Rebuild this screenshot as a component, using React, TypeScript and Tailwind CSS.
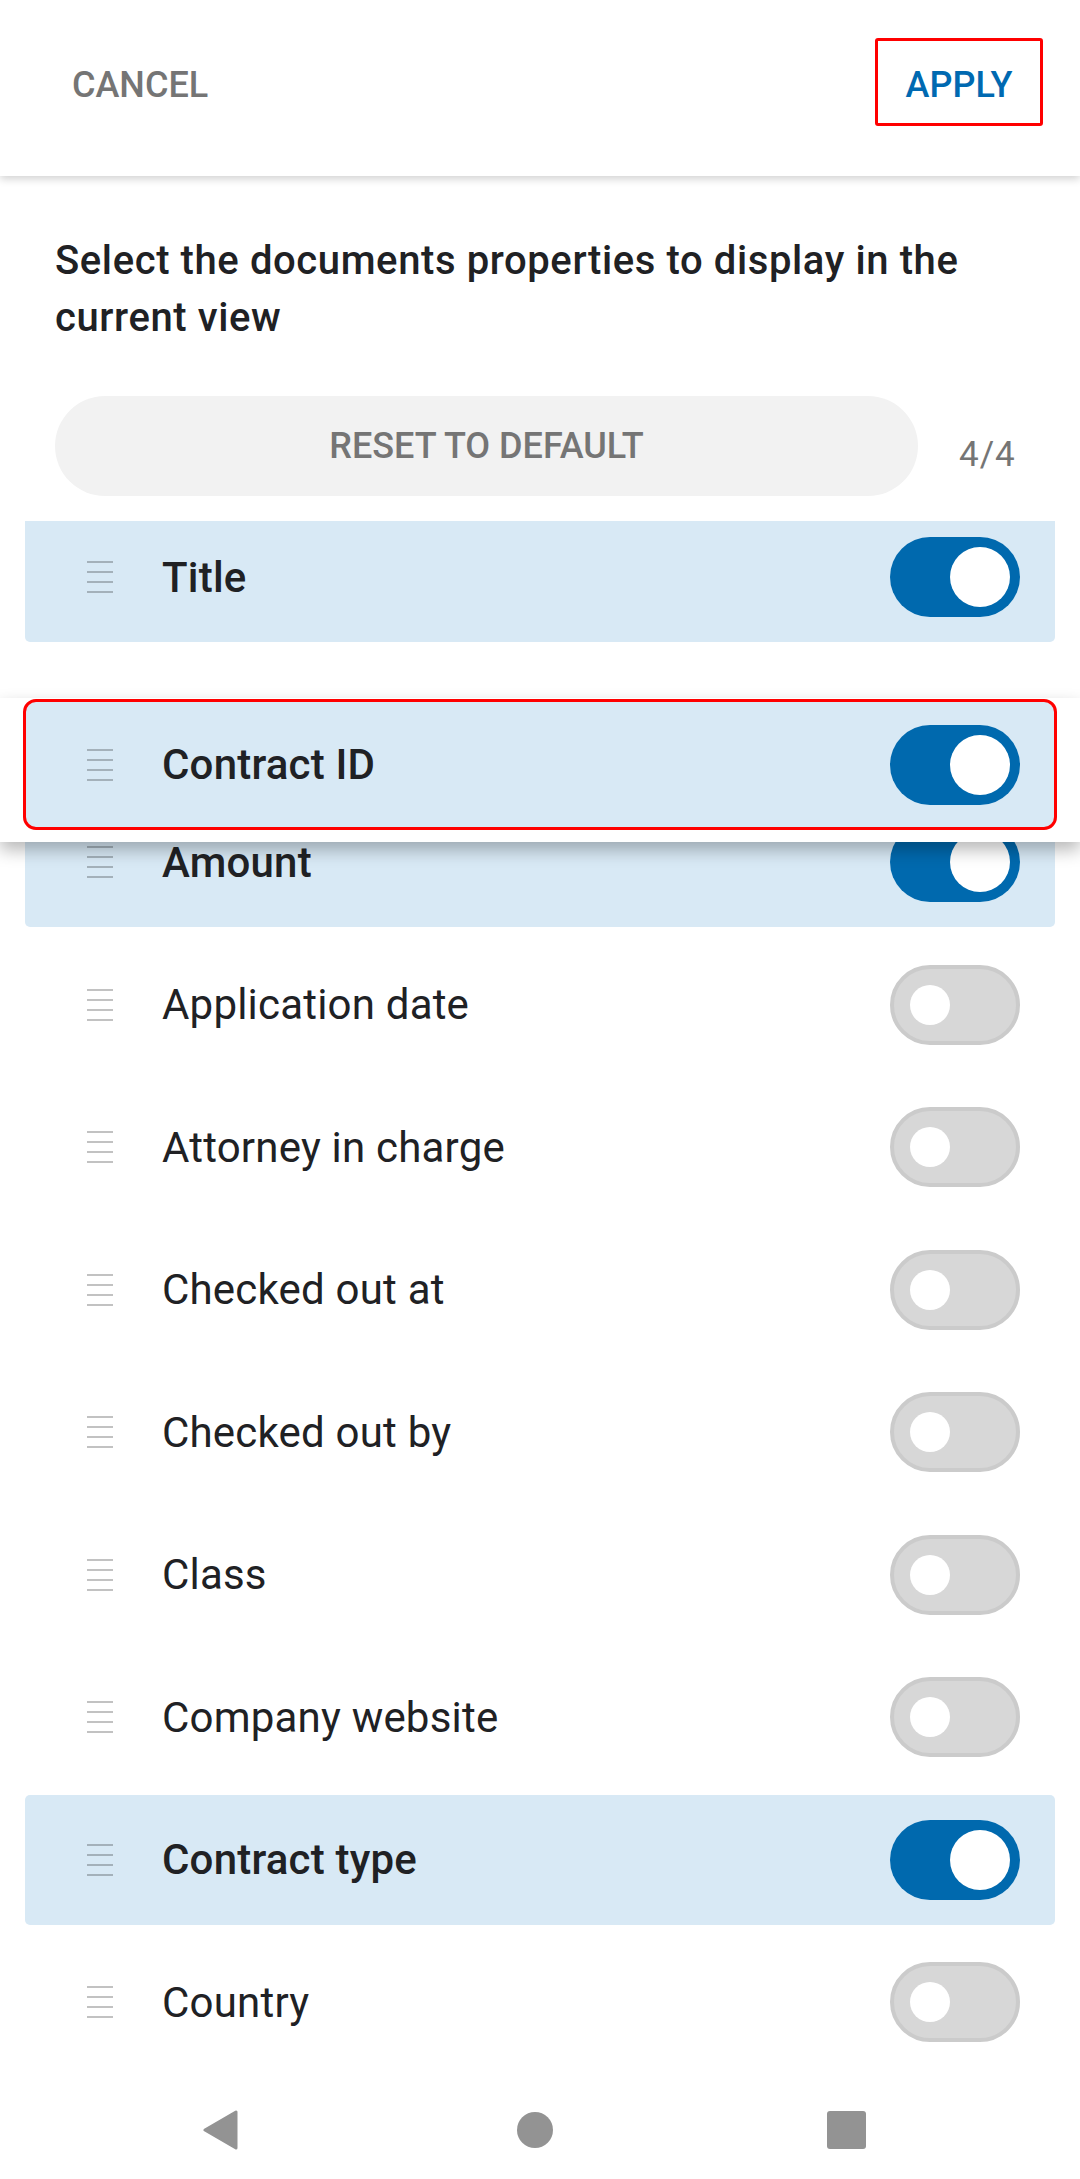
import React from 'react';

type Prop = { id: string; label: string; on: boolean };

const props: Prop[] = [
  { id: 'title', label: 'Title', on: true },
  { id: 'slot', label: '', on: true },
  { id: 'amount', label: 'Amount', on: true },
  { id: 'appdate', label: 'Application date', on: false },
  { id: 'attorney', label: 'Attorney in charge', on: false },
  { id: 'coat', label: 'Checked out at', on: false },
  { id: 'coby', label: 'Checked out by', on: false },
  { id: 'class', label: 'Class', on: false },
  { id: 'website', label: 'Company website', on: false },
  { id: 'ctype', label: 'Contract type', on: true },
  { id: 'country', label: 'Country', on: false },
];

const DragHandle: React.FC = () => (
  <svg width="26" height="32" viewBox="0 0 26 32" className="shrink-0">
    <g fill="rgba(0,0,0,0.24)">
      <rect x="0" y="0" width="26" height="2" />
      <rect x="0" y="10" width="26" height="2" />
      <rect x="0" y="20" width="26" height="2" />
      <rect x="0" y="30" width="26" height="2" />
    </g>
  </svg>
);

const Toggle: React.FC<{ on: boolean }> = ({ on }) =>
  on ? (
    <div className="flex h-[80px] w-[130px] shrink-0 items-center justify-end rounded-full bg-[#0069ae] pr-[10px]">
      <div className="h-[60px] w-[60px] rounded-full bg-white" />
    </div>
  ) : (
    <div className="flex h-[80px] w-[130px] shrink-0 items-center rounded-full border-[4px] border-[#cbcbcb] bg-[#d7d7d7] pl-[16px]">
      <div className="h-[40px] w-[40px] rounded-full bg-white" />
    </div>
  );

const Row: React.FC<{ p: Prop }> = ({ p }) => {
  if (p.id === 'slot') return <div className="h-[130px]" />;
  return (
    <div
      className={`flex h-[130px] items-center rounded-[5px] pl-[62px] pr-[35px] ${
        p.on ? 'bg-[#d8e9f5]' : 'bg-white'
      }`}
    >
      <DragHandle />
      <span
        className={`ml-[49px] flex-1 text-[42px] tracking-[0.2px] text-[#202124] ${
          p.on ? 'font-medium' : 'font-normal'
        }`}
      >
        {p.label}
      </span>
      <Toggle on={p.on} />
    </div>
  );
};

const App: React.FC = () => {
  return (
    <div className="relative flex h-[2179px] w-[1080px] flex-col overflow-hidden bg-white font-['Roboto',sans-serif]">
      {/* top bar */}
      <div className="relative z-10 flex h-[176px] shrink-0 items-start justify-between bg-white pl-[72px] pr-[37px] pt-[38px] shadow-[0_3px_8px_rgba(0,0,0,0.18)]">
        <button className="flex h-[88px] items-center pt-[5px] text-[36px] font-medium text-[#757575]">CANCEL</button>
        <button className="flex h-[88px] w-[168px] items-center justify-center rounded-[3px] border-[3px] border-[#ff0000] pt-[5px] text-[36px] font-medium text-[#0069b1]">
          APPLY
        </button>
      </div>

      <div className="shrink-0 px-[55px] pt-[56px]">
        <p className="text-[40px] font-medium leading-[57px] tracking-[0.6px] text-[#202124]">
          Select the documents properties to display in the current view
        </p>
        <div className="mt-[50px] flex items-center">
          <button className="flex h-[100px] w-[863px] items-center justify-center rounded-full bg-[#f2f2f2] text-[36px] font-medium text-[#757575]">
            RESET TO DEFAULT
          </button>
          <span className="ml-[41px] mt-[18px] text-[35px] tracking-[1px] text-[#757575]">4/4</span>
        </div>
      </div>

      {/* scrolled list */}
      <div className="mt-[25px] min-h-0 flex-1 overflow-hidden px-[25px]">
        <div className="-mt-[9px] flex flex-col gap-[12.5px]">
          {props.map((p) => (
            <Row key={p.id} p={p} />
          ))}
        </div>
      </div>

      {/* system nav */}
      <div className="flex h-[98px] shrink-0 items-center bg-white pl-[203px]">
        <svg width="35" height="40" viewBox="0 0 35 40">
          <path d="M33 2 L33 38 L2 20 Z" fill="#939393" stroke="#939393" strokeWidth="3" strokeLinejoin="round" />
        </svg>
        <div className="ml-[279px] h-[36px] w-[36px] rounded-full bg-[#939393]" />
        <div className="ml-[274px] h-[38px] w-[39px] rounded-[3px] bg-[#939393]" />
      </div>

      {/* item being dragged */}
      <div className="absolute left-0 top-[698px] z-20 h-[144px] w-full bg-white shadow-[0_8px_16px_rgba(0,0,0,0.28)]">
        <div className="mx-[23px] mt-px flex h-[131px] items-center rounded-[13px] border-[3px] border-[#ff0000] bg-[#d8e9f5] pl-[61px] pr-[34px]">
          <DragHandle />
          <span className="ml-[49px] flex-1 text-[42px] font-medium tracking-[0.2px] text-[#202124]">Contract ID</span>
          <Toggle on />
        </div>
      </div>
    </div>
  );
};

export default App;
